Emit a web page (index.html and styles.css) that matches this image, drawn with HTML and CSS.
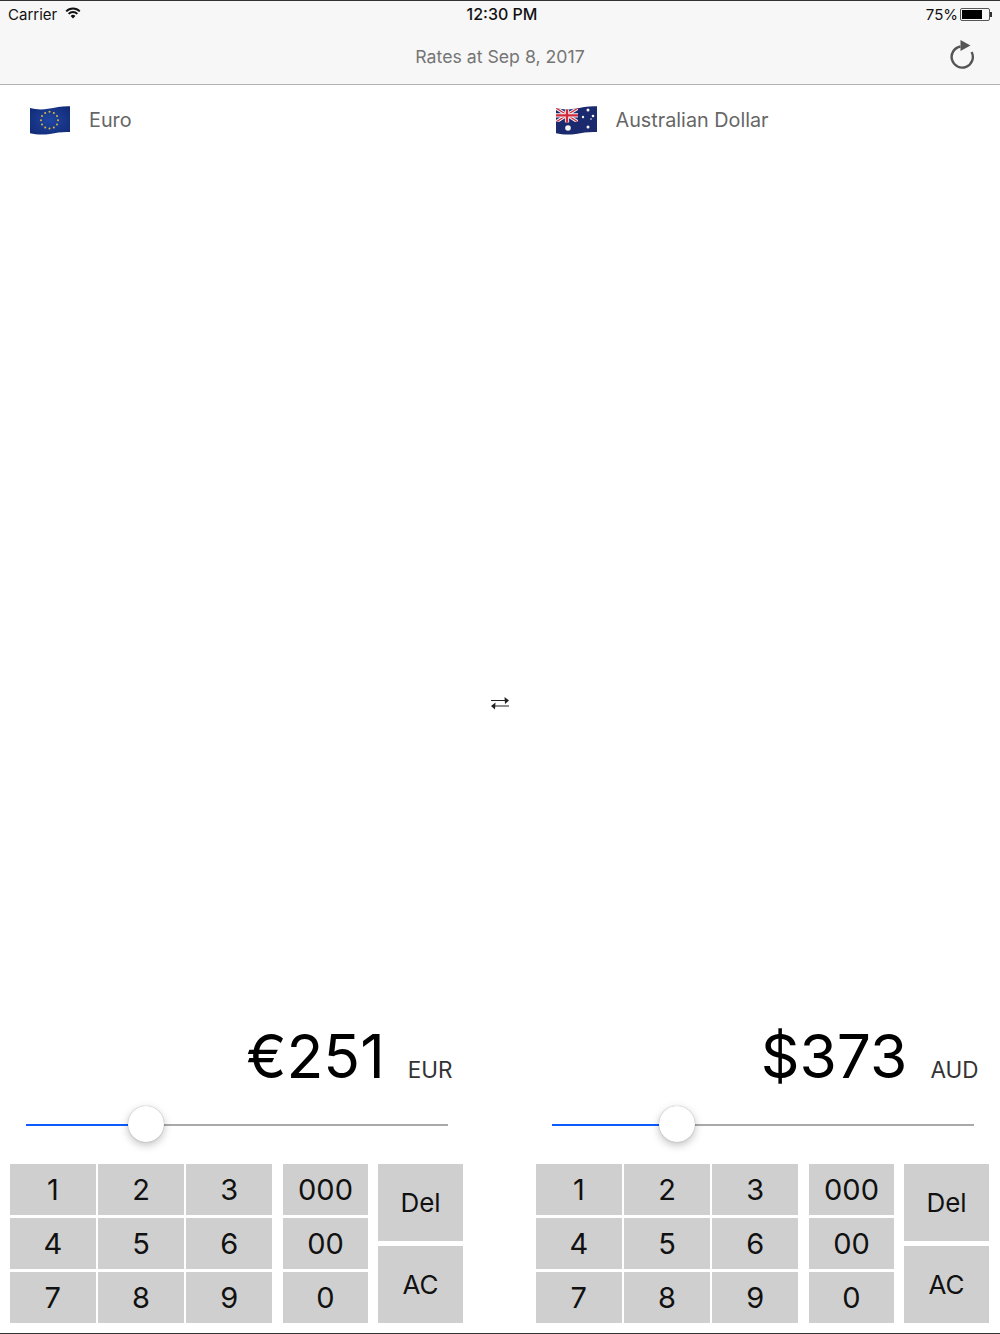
FILE: index.html
```html
<!DOCTYPE html>
<html lang="en">
<head>
    <meta charset="UTF-8">
    <meta name="viewport" content="width=device-width, initial-scale=1.0">
    <title>Currency Converter</title>
    <link rel="stylesheet" href="styles.css">
</head>
<body>

    <div class="app">
        <header class="top-bar">
            <div class="status-bar">
                <div class="status-left">
                    <span>Carrier</span>
                    <svg class="wifi" width="16" height="12" viewBox="0 0 16 12">
                        <path d="M8 11.6 5.6 9a3.4 3.4 0 0 1 4.8 0Z" fill="#111"/>
                        <path d="M3.6 6.9a6.2 6.2 0 0 1 8.8 0M1.2 4.3a9.6 9.6 0 0 1 13.6 0" fill="none" stroke="#111" stroke-width="1.9"/>
                    </svg>
                </div>
                <div class="status-time">12:30 PM</div>
                <div class="status-right">
                    <span>75%</span>
                    <div class="battery"><div class="battery-level"></div></div>
                    <div class="battery-tip"></div>
                </div>
            </div>
            <div class="nav-bar">
                <div class="nav-title">Rates at Sep 8, 2017</div>
                <svg class="refresh" width="28" height="30" viewBox="0 0 28 30">
                    <path d="M13.5 7.5A10.6 10.6 0 1 0 24.6 13" fill="none" stroke="#555" stroke-width="2.4"/>
                    <path d="M13.5 1 23.5 6.6 13.5 12Z" fill="#555"/>
                </svg>
            </div>
        </header>

        <main class="panels">
            <section class="panel">
                <div class="currency">
                    <svg class="flag" width="40" height="30" viewBox="0 0 40 30">
                        <radialGradient id="eu-blue" cx="50%" cy="50%" r="65%">
                            <stop offset="0" stop-color="#1f46a3"/>
                            <stop offset="1" stop-color="#122a75"/>
                        </radialGradient>
                        <path d="M0 3C5 4.200 11 5 18 3.800 26 2.300 33 .8 40 1.200V27C33 26.600 27 27.600 20 28.900 12 30.200 6 29.400 0 28.300Z" fill="url(#eu-blue)"/>
                        <g fill="#d9b93b">
                            <circle cx="19.500" cy="6.800" r="1"/><circle cx="23.800" cy="7.900" r="1"/><circle cx="27" cy="11" r="1"/>
                            <circle cx="28" cy="15.200" r="1"/><circle cx="27" cy="19.400" r="1"/><circle cx="23.800" cy="22.500" r="1"/>
                            <circle cx="19.500" cy="23.600" r="1"/><circle cx="15.200" cy="22.500" r="1"/><circle cx="12" cy="19.400" r="1"/>
                            <circle cx="11" cy="15.200" r="1"/><circle cx="12" cy="11" r="1"/><circle cx="15.200" cy="7.900" r="1"/>
                        </g>
                    </svg>
                    <span class="currency-name">Euro</span>
                </div>
                <div class="converter">
                    <div class="amount"><span class="amount-value">€251</span><span class="amount-code">EUR</span></div>
                    <div class="slider">
                        <div class="slider-fill" style="width: 24.5%"></div>
                        <div class="slider-thumb" style="left: 28.5%"></div>
                    </div>
                    <div class="keypad">
                        <div class="keys-digits">
                            <button>1</button><button>2</button><button>3</button>
                            <button>4</button><button>5</button><button>6</button>
                            <button>7</button><button>8</button><button>9</button>
                        </div>
                        <div class="keys-zeros">
                            <button>000</button><button>00</button><button>0</button>
                        </div>
                        <div class="keys-actions">
                            <button>Del</button><button>AC</button>
                        </div>
                    </div>
                </div>
            </section>

            <div class="swap">
                <svg width="20" height="14" viewBox="0 0 20 14">
                    <path d="M1 4.500H17M2 10H19" fill="none" stroke="#222" stroke-width="1.100"/>
                    <path d="M14.500 1 19 4.500 15 8ZM5.500 6.500 1 10 5 13.500Z" fill="#222"/>
                </svg>
            </div>

            <section class="panel">
                <div class="currency currency-right">
                    <svg class="flag" width="41" height="30" viewBox="0 0 41 30">
                        <clipPath id="canton"><path d="M0 3C5 4.200 11 5 18 3.800L22 3.100V16.500C14 18.100 7 17.600 0 16.500Z"/></clipPath>
                        <path d="M0 3C5 4.200 11 5 18 3.800 26 2.300 33 .8 41 1.200V27C33 26.600 27 27.600 20 28.900 12 30.200 6 29.400 0 28.300Z" fill="#1b2a6e"/>
                        <g clip-path="url(#canton)">
                            <path d="M0 3 22 17M22 3 0 17" stroke="#f3f3f3" stroke-width="3.200"/>
                            <path d="M0 3 22 17M22 3 0 17" stroke="#d2283c" stroke-width="1.200"/>
                            <path d="M11 2V19M0 10.400H22" stroke="#f3f3f3" stroke-width="4.200"/>
                            <path d="M11 2V19M0 10.400H22" stroke="#d2283c" stroke-width="2.400"/>
                        </g>
                        <g fill="#f4f4f4">
                            <circle cx="12" cy="23" r="2.800"/>
                            <circle cx="32" cy="5" r="1.500"/><circle cx="27" cy="12" r="1.200"/>
                            <circle cx="37" cy="11" r="1.300"/><circle cx="35" cy="14" r="0.800"/>
                            <circle cx="32" cy="22" r="1.500"/>
                        </g>
                    </svg>
                    <span class="currency-name">Australian Dollar</span>
                </div>
                <div class="converter">
                    <div class="amount"><span class="amount-value">$373</span><span class="amount-code">AUD</span></div>
                    <div class="slider">
                        <div class="slider-fill" style="width: 25.5%"></div>
                        <div class="slider-thumb" style="left: 29.7%"></div>
                    </div>
                    <div class="keypad">
                        <div class="keys-digits">
                            <button>1</button><button>2</button><button>3</button>
                            <button>4</button><button>5</button><button>6</button>
                            <button>7</button><button>8</button><button>9</button>
                        </div>
                        <div class="keys-zeros">
                            <button>000</button><button>00</button><button>0</button>
                        </div>
                        <div class="keys-actions">
                            <button>Del</button><button>AC</button>
                        </div>
                    </div>
                </div>
            </section>
        </main>
    </div>

</body>
</html>
```

FILE: styles.css
```css
body {
    margin: 0;
    background-color: #fff;
    font-family: Inter, "Liberation Sans", sans-serif;
    color: #000;
}

.app {
    height: 1334px;
    box-sizing: border-box;
    border-top: 1px solid #333;
    border-bottom: 1px solid #333;
    display: flex;
    flex-direction: column;
    overflow: hidden;
}

/* Top bar */
.top-bar {
    height: 84px;
    box-sizing: border-box;
    background-color: #f7f7f7;
    border-bottom: 1px solid #b2b2b2;
    flex-shrink: 0;
}

.status-bar {
    height: 26px;
    padding: 0 8px;
    display: grid;
    grid-template-columns: 1fr auto 1fr;
    align-items: center;
    font-size: 15px;
    color: #111;
}

.status-left {
    display: flex;
    align-items: center;
    gap: 8px;
}

.wifi {
    margin-top: -3px;
}

.status-time {
    padding-left: 4px;
    font-weight: 500;
    font-size: 16px;
}

.status-right {
    display: flex;
    align-items: center;
    justify-content: flex-end;
}

.battery {
    width: 26px;
    height: 9px;
    margin-left: 2px;
    padding: 1px;
    border: 1px solid #555;
    border-radius: 2px;
}

.battery-level {
    width: 75%;
    height: 100%;
    background-color: #000;
}

.battery-tip {
    width: 2px;
    height: 5px;
    background-color: #333;
}

.nav-bar {
    height: 57px;
    display: flex;
    align-items: center;
    justify-content: center;
    position: relative;
}

.nav-title {
    padding-top: 2px;
    font-size: 17.700px;
    color: #757575;
}

.refresh {
    position: absolute;
    right: 25px;
    top: 12px;
}

/* Panels */
.panels {
    flex: 1;
    display: grid;
    grid-template-columns: 453px 73px 453px;
    padding: 0 11px 10px 10px;
}

.panel {
    display: flex;
    flex-direction: column;
    justify-content: space-between;
}

.currency {
    display: flex;
    align-items: center;
    padding: 20px 0 0 20px;
}

.currency-right {
    padding-left: 19.500px;
}

.flag {
    flex-shrink: 0;
}

.currency-name {
    margin-left: 19px;
    font-size: 19.800px;
    color: #666;
}

.swap {
    display: flex;
    align-items: center;
    justify-content: center;
    padding-bottom: 2px;
}

/* Amount */
.amount {
    display: flex;
    align-items: baseline;
    justify-content: flex-end;
    gap: 23px;
    padding-right: 10.500px;
}

.amount-value {
    font-size: 60.500px;
    line-height: 72px;
}

.amount-code {
    font-size: 22.500px;
    color: #333;
}

/* Slider */
.slider {
    height: 2px;
    margin: 32px 15.500px 38px 16px;
    background-color: #a9a9a9;
    position: relative;
}

.slider-fill {
    height: 100%;
    background-color: #0a5cff;
}

.slider-thumb {
    position: absolute;
    top: -18px;
    width: 36px;
    height: 36px;
    margin-left: -18px;
    border-radius: 50%;
    background-color: #fff;
    box-shadow: 0 3px 8px rgba(0, 0, 0, 0.25), 0 0 1px rgba(0, 0, 0, 0.4);
}

/* Keypad */
.keypad {
    display: grid;
    grid-template-columns: 262px 86px 85px;
    gap: 10px;
    height: 159px;
}

.keypad button {
    border: none;
    padding: 0;
    background-color: #cfcfcf;
    color: #111;
    font-family: inherit;
    font-size: 29px;
}

.keys-digits {
    display: grid;
    grid-template-columns: repeat(3, 1fr);
    grid-template-rows: repeat(3, 1fr);
    gap: 2.500px;
}

.keys-zeros {
    display: grid;
    grid-template-rows: repeat(3, 1fr);
    gap: 2.500px;
    margin-left: 1px;
}

.keys-actions {
    display: grid;
    grid-template-rows: repeat(2, 1fr);
    gap: 5px;
}

.keypad .keys-actions button {
    font-size: 26px;
}
```
